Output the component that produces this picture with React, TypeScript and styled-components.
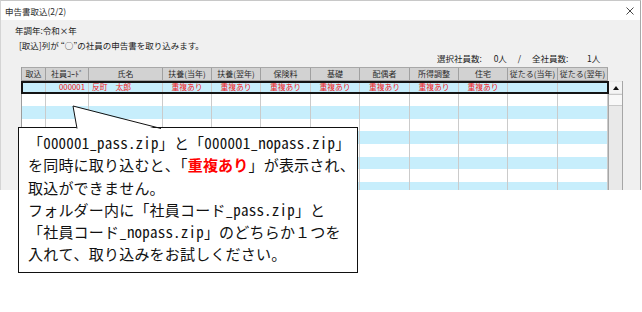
import React from "react";
import styled, { createGlobalStyle } from "styled-components";

const Global = createGlobalStyle`
  html, body { margin: 0; padding: 0; background: #ffffff; }
  body { font-family: "Noto Sans CJK JP", sans-serif; color: #222; }
`;

const Stage = styled.div`
  position: relative;
  width: 642px;
  height: 312px;
  overflow: hidden;
  background: #ffffff;
`;

const Window = styled.div`
  box-sizing: border-box;
  width: 641px;
  height: 190px;
  overflow: hidden;
  background: #f0f0f0;
  border-left: 1px solid #d4d4d4;
  border-right: 1px solid #a8a8a8;
  border-top: 1px solid #c8c8c8;
  display: flex;
  flex-direction: column;
`;

const TitleBar = styled.div`
  height: 19px;
  flex: none;
  background: #ffffff;
  display: flex;
  align-items: center;
  padding: 0 6px 0 4px;
`;

const Title = styled.span`
  font-size: 8.5px;
  line-height: 12px;
  color: #2a2a2a;
`;

const CloseBox = styled.span`
  margin-left: auto;
  display: flex;
  align-items: center;
`;

const Body = styled.div`
  display: flex;
  flex-direction: column;
  padding-left: 14px;
`;

const InfoLine = styled.div<{ $top: number; $indent?: number }>`
  height: 12px;
  line-height: 12px;
  font-size: 8.5px;
  color: #222;
  margin-top: ${(p) => p.$top}px;
  margin-left: ${(p) => p.$indent ?? 0}px;
  white-space: nowrap;
`;

const CountRow = styled.div`
  display: flex;
  height: 12px;
  line-height: 12px;
  font-size: 8.5px;
  color: #222;
  margin-top: 1px;
  padding-left: 422px;
  white-space: nowrap;
`;

const CountPart = styled.span<{ $w?: number; $align?: string }>`
  display: inline-block;
  width: ${(p) => (p.$w ? `${p.$w}px` : "auto")};
  text-align: ${(p) => p.$align ?? "left"};
`;

const GridArea = styled.div`
  display: flex;
  margin-top: 3px;
  margin-left: 6px;
`;

const GridMain = styled.div`
  display: flex;
  flex-direction: column;
  border-left: 1px solid #9c9c9c;
`;

const HeaderRow = styled.div`
  display: flex;
  height: 14px;
  border-top: 1px solid #a8a8a8;
  box-sizing: border-box;
`;

const HeaderCell = styled.div<{ $w: number }>`
  box-sizing: border-box;
  width: ${(p) => p.$w}px;
  height: 13px;
  background: #d2d2d2;
  border-right: 1px solid #a0a0a0;
  border-bottom: 1px solid #a0a0a0;
  font-size: 8px;
  line-height: 12px;
  color: #2a2a2a;
  text-align: center;
  white-space: nowrap;
  overflow: hidden;
`;

const DataRow = styled.div<{ $blue: boolean; $selected?: boolean }>`
  position: relative;
  display: flex;
  height: 12.6px;
  background: ${(p) => (p.$blue ? "#c7eefc" : "#ffffff")};
  &::after {
    content: "";
    display: ${(p) => (p.$selected ? "block" : "none")};
    position: absolute;
    left: -1px;
    right: -1px;
    top: 0;
    bottom: 0;
    border: 2px solid #141414;
    pointer-events: none;
  }
`;

const DataCell = styled.div<{ $w: number; $align?: string }>`
  box-sizing: border-box;
  width: ${(p) => p.$w}px;
  border-right: 1px solid #cbcbcb;
  font-size: 7.8px;
  line-height: 12.6px;
  color: #f01a22;
  text-align: ${(p) => p.$align ?? "center"};
  padding: 0 3px;
  white-space: nowrap;
  overflow: hidden;
`;

const Scrollbar = styled.div`
  box-sizing: border-box;
  width: 15px;
  margin-top: 14px;
  height: 120px;
  background: #e9e9e9;
  border-left: 1px solid #a6a6a6;
  border-right: 1px solid #a6a6a6;
  display: flex;
  flex-direction: column;
  align-items: stretch;
  padding-top: 1px;
`;

const ScrollButton = styled.div`
  height: 11px;
  background: #f4f4f4;
  display: flex;
  align-items: center;
  justify-content: center;
`;

const ScrollThumb = styled.div`
  height: 10px;
  margin-top: 1px;
  background: #f8f8f8;
  border-top: 1px solid #c8c8c8;
  border-bottom: 1px solid #c8c8c8;
`;

const Callout = styled.div`
  position: absolute;
  left: 18px;
  top: 127px;
  box-sizing: border-box;
  width: 340px;
  height: 146px;
  background: #ffffff;
  border: 1px solid #111111;
  padding: 4px 0 0 9px;
  font-family: "Noto Sans Mono CJK JP", "Noto Sans CJK JP", monospace;
  font-size: 15px;
  line-height: 22.3px;
  color: #111;
  letter-spacing: 0.2px;
  white-space: nowrap;
`;

const Pointer = styled.svg`
  position: absolute;
  left: 50px;
  top: -23px;
`;

const Red = styled.span`
  color: #ff0000;
  font-weight: bold;
`;

const cols = [24, 43, 74, 49, 49, 50, 49, 50, 49, 49, 50, 50];
const headers = [
  "取込",
  "社員ｺｰﾄﾞ",
  "氏名",
  "扶養(当年)",
  "扶養(翌年)",
  "保険料",
  "基礎",
  "配偶者",
  "所得調整",
  "住宅",
  "従たる(当年)",
  "従たる(翌年)",
];

const firstRow: { text: string; align?: string }[] = [
  { text: "" },
  { text: "000001", align: "right" },
  { text: "反町　太郎", align: "left" },
  { text: "重複あり" },
  { text: "重複あり" },
  { text: "重複あり" },
  { text: "重複あり" },
  { text: "重複あり" },
  { text: "重複あり" },
  { text: "重複あり" },
  { text: "" },
  { text: "" },
];

export default function App() {
  const rows = Array.from({ length: 10 }, (_, i) => i);
  return (
    <Stage>
      <Global />
      <Window>
        <TitleBar>
          <Title>申告書取込(2/2)</Title>
          <CloseBox>
            <svg width="8" height="8" viewBox="0 0 8 8">
              <path d="M0.5 0.5 L7.5 7.5 M7.5 0.5 L0.5 7.5" stroke="#333" strokeWidth="0.9" fill="none" />
            </svg>
          </CloseBox>
        </TitleBar>
        <Body>
          <InfoLine $top={4}>年調年:令和×年</InfoLine>
          <InfoLine $top={3} $indent={4}>
            [取込]列が “○”の社員の申告書を取り込みます。
          </InfoLine>
          <CountRow>
            <CountPart>選択社員数:</CountPart>
            <CountPart $w={25} $align="right">0人</CountPart>
            <CountPart $w={25} $align="center">/</CountPart>
            <CountPart>全社員数:</CountPart>
            <CountPart $w={32} $align="right">1人</CountPart>
          </CountRow>
          <GridArea>
            <GridMain>
              <HeaderRow>
                {headers.map((h, i) => (
                  <HeaderCell key={h} $w={cols[i]}>
                    {h}
                  </HeaderCell>
                ))}
              </HeaderRow>
              {rows.map((r) => (
                <DataRow key={r} $blue={r % 2 === 0} $selected={r === 0}>
                  {cols.map((w, ci) => (
                    <DataCell key={ci} $w={w} $align={r === 0 ? firstRow[ci].align : undefined}>
                      {r === 0 ? firstRow[ci].text : ""}
                    </DataCell>
                  ))}
                </DataRow>
              ))}
            </GridMain>
            <Scrollbar>
              <ScrollButton>
                <svg width="6" height="4" viewBox="0 0 6 4">
                  <path d="M3 0 L6 4 L0 4 Z" fill="#111" />
                </svg>
              </ScrollButton>
              <ScrollThumb />
            </Scrollbar>
          </GridArea>
        </Body>
      </Window>
      <Callout>
        <Pointer width="100" height="25" viewBox="0 0 100 25">
          <polygon points="4,1 8,25 92,25" fill="#ffffff" />
          <polyline points="8,23.5 4,1 92,23.5" fill="none" stroke="#111" strokeWidth="1" />
        </Pointer>
        「000001_pass.zip」と「000001_nopass.zip」
        <br />
        を同時に取り込むと、「<Red>重複あり</Red>」が表示され、
        <br />
        取込ができません。
        <br />
        フォルダー内に「社員コード_pass.zip」と
        <br />
        「社員コード_nopass.zip」のどちらか１つを
        <br />
        入れて、取り込みをお試しください。
      </Callout>
    </Stage>
  );
}
